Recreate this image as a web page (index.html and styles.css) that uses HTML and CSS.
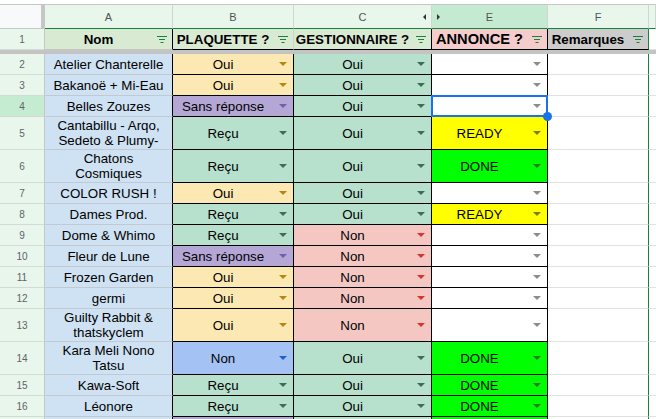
FILE: index.html
```html
<!DOCTYPE html>
<html>
<head>
	<meta charset="utf-8">
	<title>Annonces</title>
	<link rel="stylesheet" href="styles.css">
</head>
<body>
	<div class="sheet">
		<!-- lettres des colonnes (D est masquée) -->
		<div class="row heads">
			<div class="corner"></div>
			<div class="ch">A</div>
			<div class="ch">B</div>
			<div class="ch hid-before">C<span class="hid-l"></span></div>
			<div class="ch on hid-after"><span class="hid-r"></span>E</div>
			<div class="ch">F</div>
			<div class="ch"></div>
		</div>

		<div class="row titles">
			<div class="rn">1</div>
			<div class="cell t-a"><span class="val">Nom</span><svg class="filter" width="10" height="7" viewBox="0 0 10 7"><path d="M0 .5h10M2 3.5h6M3.5 6.5h3"/></svg></div>
			<div class="cell t-b"><span class="val">PLAQUETTE ?</span><svg class="filter" width="10" height="7" viewBox="0 0 10 7"><path d="M0 .5h10M2 3.5h6M3.5 6.5h3"/></svg></div>
			<div class="cell t-c"><span class="val">GESTIONNAIRE ?</span><svg class="filter" width="10" height="7" viewBox="0 0 10 7"><path d="M0 .5h10M2 3.5h6M3.5 6.5h3"/></svg></div>
			<div class="cell t-e"><span class="val">ANNONCE ?</span><svg class="filter" width="10" height="7" viewBox="0 0 10 7"><path d="M0 .5h10M2 3.5h6M3.5 6.5h3"/></svg></div>
			<div class="cell t-f"><span class="val">Remarques</span><svg class="filter" width="10" height="7" viewBox="0 0 10 7"><path d="M0 .5h10M2 3.5h6M3.5 6.5h3"/></svg></div>
			<div class="cell g-col"></div>
		</div>
		<div class="freeze"></div>

		<div class="row">
			<div class="rn">2</div>
			<div class="cell nom">Atelier Chanterelle</div>
			<div class="cell dd y"><span class="val">Oui</span><i class="arr"></i></div>
			<div class="cell dd c g"><span class="val">Oui</span><i class="arr"></i></div>
			<div class="cell dd e w"><span class="val"></span><i class="arr"></i></div>
			<div class="cell f-col"></div>
			<div class="cell g-col"></div>
		</div>
		<div class="row">
			<div class="rn">3</div>
			<div class="cell nom">Bakanoë + Mi-Eau</div>
			<div class="cell dd y"><span class="val">Oui</span><i class="arr"></i></div>
			<div class="cell dd c g"><span class="val">Oui</span><i class="arr"></i></div>
			<div class="cell dd e w"><span class="val"></span><i class="arr"></i></div>
			<div class="cell f-col"></div>
			<div class="cell g-col"></div>
		</div>
		<div class="row">
			<div class="rn on">4</div>
			<div class="cell nom">Belles Zouzes</div>
			<div class="cell dd p"><span class="val">Sans réponse</span><i class="arr"></i></div>
			<div class="cell dd c g"><span class="val">Oui</span><i class="arr"></i></div>
			<div class="cell dd e w selected"><span class="val"></span><i class="arr"></i><span class="handle"></span></div>
			<div class="cell f-col"></div>
			<div class="cell g-col"></div>
		</div>
		<div class="row tall">
			<div class="rn">5</div>
			<div class="cell nom">Cantabillu - Arqo,<br>Sedeto &amp; Plumy-</div>
			<div class="cell dd g"><span class="val">Reçu</span><i class="arr"></i></div>
			<div class="cell dd c g"><span class="val">Oui</span><i class="arr"></i></div>
			<div class="cell dd e ready"><span class="val">READY</span><i class="arr"></i></div>
			<div class="cell f-col"></div>
			<div class="cell g-col"></div>
		</div>
		<div class="row tall">
			<div class="rn">6</div>
			<div class="cell nom">Chatons<br>Cosmiques</div>
			<div class="cell dd g"><span class="val">Reçu</span><i class="arr"></i></div>
			<div class="cell dd c g"><span class="val">Oui</span><i class="arr"></i></div>
			<div class="cell dd e done"><span class="val">DONE</span><i class="arr"></i></div>
			<div class="cell f-col"></div>
			<div class="cell g-col"></div>
		</div>
		<div class="row">
			<div class="rn">7</div>
			<div class="cell nom">COLOR RUSH !</div>
			<div class="cell dd y"><span class="val">Oui</span><i class="arr"></i></div>
			<div class="cell dd c g"><span class="val">Oui</span><i class="arr"></i></div>
			<div class="cell dd e w"><span class="val"></span><i class="arr"></i></div>
			<div class="cell f-col"></div>
			<div class="cell g-col"></div>
		</div>
		<div class="row">
			<div class="rn">8</div>
			<div class="cell nom">Dames Prod.</div>
			<div class="cell dd g"><span class="val">Reçu</span><i class="arr"></i></div>
			<div class="cell dd c g"><span class="val">Oui</span><i class="arr"></i></div>
			<div class="cell dd e ready"><span class="val">READY</span><i class="arr"></i></div>
			<div class="cell f-col"></div>
			<div class="cell g-col"></div>
		</div>
		<div class="row">
			<div class="rn">9</div>
			<div class="cell nom">Dome &amp; Whimo</div>
			<div class="cell dd g"><span class="val">Reçu</span><i class="arr"></i></div>
			<div class="cell dd c r"><span class="val">Non</span><i class="arr"></i></div>
			<div class="cell dd e w"><span class="val"></span><i class="arr"></i></div>
			<div class="cell f-col"></div>
			<div class="cell g-col"></div>
		</div>
		<div class="row">
			<div class="rn">10</div>
			<div class="cell nom">Fleur de Lune</div>
			<div class="cell dd p"><span class="val">Sans réponse</span><i class="arr"></i></div>
			<div class="cell dd c r"><span class="val">Non</span><i class="arr"></i></div>
			<div class="cell dd e w"><span class="val"></span><i class="arr"></i></div>
			<div class="cell f-col"></div>
			<div class="cell g-col"></div>
		</div>
		<div class="row">
			<div class="rn">11</div>
			<div class="cell nom">Frozen Garden</div>
			<div class="cell dd y"><span class="val">Oui</span><i class="arr"></i></div>
			<div class="cell dd c r"><span class="val">Non</span><i class="arr"></i></div>
			<div class="cell dd e w"><span class="val"></span><i class="arr"></i></div>
			<div class="cell f-col"></div>
			<div class="cell g-col"></div>
		</div>
		<div class="row">
			<div class="rn">12</div>
			<div class="cell nom">germi</div>
			<div class="cell dd y"><span class="val">Oui</span><i class="arr"></i></div>
			<div class="cell dd c r"><span class="val">Non</span><i class="arr"></i></div>
			<div class="cell dd e w"><span class="val"></span><i class="arr"></i></div>
			<div class="cell f-col"></div>
			<div class="cell g-col"></div>
		</div>
		<div class="row tall">
			<div class="rn">13</div>
			<div class="cell nom">Guilty Rabbit &amp;<br>thatskyclem</div>
			<div class="cell dd y"><span class="val">Oui</span><i class="arr"></i></div>
			<div class="cell dd c r"><span class="val">Non</span><i class="arr"></i></div>
			<div class="cell dd e w"><span class="val"></span><i class="arr"></i></div>
			<div class="cell f-col"></div>
			<div class="cell g-col"></div>
		</div>
		<div class="row tall">
			<div class="rn">14</div>
			<div class="cell nom">Kara Meli Nono<br>Tatsu</div>
			<div class="cell dd b"><span class="val">Non</span><i class="arr"></i></div>
			<div class="cell dd c g"><span class="val">Oui</span><i class="arr"></i></div>
			<div class="cell dd e done"><span class="val">DONE</span><i class="arr"></i></div>
			<div class="cell f-col"></div>
			<div class="cell g-col"></div>
		</div>
		<div class="row">
			<div class="rn">15</div>
			<div class="cell nom">Kawa-Soft</div>
			<div class="cell dd g"><span class="val">Reçu</span><i class="arr"></i></div>
			<div class="cell dd c g"><span class="val">Oui</span><i class="arr"></i></div>
			<div class="cell dd e done"><span class="val">DONE</span><i class="arr"></i></div>
			<div class="cell f-col"></div>
			<div class="cell g-col"></div>
		</div>
		<div class="row">
			<div class="rn">16</div>
			<div class="cell nom">Léonore</div>
			<div class="cell dd g"><span class="val">Reçu</span><i class="arr"></i></div>
			<div class="cell dd c g"><span class="val">Oui</span><i class="arr"></i></div>
			<div class="cell dd e done"><span class="val">DONE</span><i class="arr"></i></div>
			<div class="cell f-col"></div>
			<div class="cell g-col"></div>
		</div>
		<!-- ligne suivante, à peine visible en bas -->
		<div class="row">
			<div class="rn"></div>
			<div class="cell nom"></div>
			<div class="cell dd p"></div>
			<div class="cell dd c g"></div>
			<div class="cell dd e done"></div>
			<div class="cell f-col"></div>
			<div class="cell g-col"></div>
		</div>
	</div>
</body>
</html>
```

FILE: styles.css
```css
* {
	padding: 0px;
	margin: 0px;
	box-sizing: border-box;
}
body {
	background: #fff;
	font-family: "Liberation Sans", Arial, sans-serif;
	font-size: 10pt;
	color: #000;
	overflow: hidden;
}
.sheet {
	padding-top: 4px;
}
.row {
	display: grid;
	grid-template-columns: 45px 128px 121px 138px 116px 101px 1fr;
	height: 21px;
}
.row.tall {
	height: 33px;
}

/* lettres des colonnes */
.heads {
	height: 25px;
}
.corner {
	background: #f8f9fa;
	border-top: 1px solid #c4c7c5;
	border-right: 4px solid #c4c7c5;
	border-bottom: 1px solid #c4c7c5;
}
.ch {
	position: relative;
	display: flex;
	align-items: center;
	justify-content: center;
	background: #e9f6ec;
	border-top: 1px solid #c4c7c5;
	border-right: 1px solid #d0d7d2;
	border-bottom: 1px solid #188038;
	font-size: 11px;
	color: #505552;
}
.ch.on {
	background: #c4ebd2;
}
.hid-l, .hid-r {
	position: absolute;
	top: 9px;
	width: 0;
	height: 0;
	border-top: 3px solid transparent;
	border-bottom: 3px solid transparent;
}
.hid-l {
	right: 5px;
	border-right: 3px solid #333;
}
.hid-r {
	left: 5px;
	border-left: 3px solid #333;
}

/* numéros de lignes */
.rn {
	display: flex;
	align-items: center;
	justify-content: center;
	background: #e9f6ec;
	border-right: 1px solid #c4c7c5;
	border-bottom: 1px solid #d3dbd5;
	font-size: 10px;
	color: #5f6368;
}
.rn.on {
	background: #c5ebd1;
}

/* cellules */
.cell {
	position: relative;
	display: flex;
	align-items: center;
	justify-content: center;
	text-align: center;
	line-height: 15px;
	overflow: hidden;
	border-right: 1px solid #000;
	border-bottom: 1px solid #000;
	white-space: nowrap;
}
.val {
	flex: 1;
	text-align: center;
	overflow: hidden;
}
.nom {
	background: #cfe2f3;
	border-bottom-color: #c3c9cf;
}
.f-col {
	border-right-color: #188038;
	border-bottom-color: #e2e2e2;
}
.g-col {
	border-right: none;
	border-bottom-color: #e2e2e2;
}
.arr {
	width: 0;
	height: 0;
	margin: 0 6px 0 6px;
	border-left: 4px solid transparent;
	border-right: 4px solid transparent;
	border-top: 4px solid var(--ac);
}

/* ligne de titres */
.titles .cell {
	font-weight: bold;
	background: #d9ead3;
	border-right-color: #c8d4c4;
}
.titles .t-a {
	border-right-color: #000;
	border-bottom-color: #c4c7c5;
}
.titles .t-e {
	background: #f4cccc;
	font-size: 11pt;
	border-left: 1px solid #000;
	margin-left: -1px;
	border-right-color: #000;
}
.titles .t-f {
	background: #cccccc;
	border-right-color: #188038;
}
.titles .g-col {
	background: #fff;
	border-bottom-color: #e2e2e2;
}
.filter {
	flex: none;
	margin: 0 5px;
}
.filter path {
	stroke: #188038;
	stroke-width: 1;
}
.freeze {
	height: 4px;
	background: #c4c4c4;
}

/* couleurs des listes déroulantes */
.y {
	background: #fce8b2;
	--ac: #b8860b;
}
.p {
	background: #b4a7d6;
	--ac: #6f5fb0;
}
.g {
	background: #b7e1cd;
	--ac: #3b6e57;
}
.r {
	background: #f4c7c3;
	--ac: #d4382c;
}
.b {
	background: #a4c2f4;
	--ac: #1b5fd2;
}
.w {
	background: #fff;
	--ac: #8c8c8c;
}
.ready {
	background: #ffff00;
	--ac: #7a7a1a;
}
.done {
	background: #00ff00;
	--ac: #2a7a2a;
}

/* cellule active E4 */
.selected {
	overflow: visible;
	z-index: 3;
}
.selected::after {
	content: "";
	position: absolute;
	top: -1px;
	left: -1px;
	right: -1px;
	bottom: -1px;
	border: 2px solid #1a73e8;
}
.handle {
	position: absolute;
	right: -5px;
	bottom: -5px;
	width: 9px;
	height: 9px;
	border-radius: 50%;
	background: #1a73e8;
	z-index: 2;
}
```
